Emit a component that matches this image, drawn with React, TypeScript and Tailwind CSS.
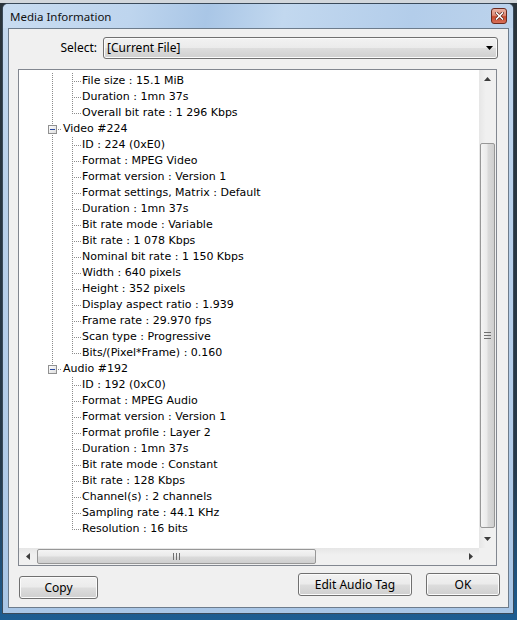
import React from 'react';

type Row =
  | { t: 'c'; text: string; l0: boolean; last: boolean }
  | { t: 'p'; text: string; lastTop: boolean };

const general = ['File size : 15.1 MiB', 'Duration : 1mn 37s', 'Overall bit rate : 1 296 Kbps'];
const video = [
  'ID : 224 (0xE0)',
  'Format : MPEG Video',
  'Format version : Version 1',
  'Format settings, Matrix : Default',
  'Duration : 1mn 37s',
  'Bit rate mode : Variable',
  'Bit rate : 1 078 Kbps',
  'Nominal bit rate : 1 150 Kbps',
  'Width : 640 pixels',
  'Height : 352 pixels',
  'Display aspect ratio : 1.939',
  'Frame rate : 29.970 fps',
  'Scan type : Progressive',
  'Bits/(Pixel*Frame) : 0.160',
];
const audio = [
  'ID : 192 (0xC0)',
  'Format : MPEG Audio',
  'Format version : Version 1',
  'Format profile : Layer 2',
  'Duration : 1mn 37s',
  'Bit rate mode : Constant',
  'Bit rate : 128 Kbps',
  'Channel(s) : 2 channels',
  'Sampling rate : 44.1 KHz',
  'Resolution : 16 bits',
];

const rows: Row[] = [
  ...general.map((text, i) => ({ t: 'c' as const, text, l0: true, last: i === general.length - 1 })),
  { t: 'p', text: 'Video #224', lastTop: false },
  ...video.map((text, i) => ({ t: 'c' as const, text, l0: true, last: i === video.length - 1 })),
  { t: 'p', text: 'Audio #192', lastTop: true },
  ...audio.map((text, i) => ({ t: 'c' as const, text, l0: false, last: i === audio.length - 1 })),
];

const DOT = '#8c8c8c';

function ChildLines({ l0, last }: { l0: boolean; last: boolean }) {
  return (
    <svg width="40" height="16" className="shrink-0 block">
      {l0 && <line x1="10.5" y1="0" x2="10.5" y2="16" stroke={DOT} strokeDasharray="1 1" />}
      <line x1="30.5" y1="0" x2="30.5" y2={last ? 9 : 16} stroke={DOT} strokeDasharray="1 1" />
      <line x1="32" y1="8.5" x2="40" y2="8.5" stroke={DOT} strokeDasharray="1 1" />
    </svg>
  );
}

function ParentLines({ lastTop }: { lastTop: boolean }) {
  return (
    <svg width="20" height="16" className="shrink-0 block">
      <line x1="10.5" y1="0" x2="10.5" y2="4" stroke={DOT} strokeDasharray="1 1" />
      {!lastTop && <line x1="10.5" y1="12" x2="10.5" y2="16" stroke={DOT} strokeDasharray="1 1" />}
      <defs>
        <linearGradient id="bx" x1="0" y1="0" x2="1" y2="1">
          <stop offset="0" stopColor="#ffffff" />
          <stop offset="1" stopColor="#dcdcdc" />
        </linearGradient>
      </defs>
      <rect x="6.5" y="4.5" width="8" height="8" fill="url(#bx)" stroke="#919191" />
      <line x1="8" y1="8.5" x2="13" y2="8.5" stroke="#2b4aa0" />
      <line x1="16" y1="8.5" x2="20" y2="8.5" stroke={DOT} strokeDasharray="1 1" />
    </svg>
  );
}

function TreeRow({ row }: { row: Row }) {
  if (row.t === 'c') {
    return (
      <div className="h-[16px] flex items-center">
        <ChildLines l0={row.l0} last={row.last} />
        <span className="leading-[16px] whitespace-nowrap">{row.text}</span>
      </div>
    );
  }
  return (
    <div className="h-[16px] flex items-center">
      <ParentLines lastTop={row.lastTop} />
      <span className="leading-[16px] whitespace-nowrap pl-[1px]">{row.text}</span>
    </div>
  );
}

function Tri({ dir, color = '#3c3c3c' }: { dir: 'up' | 'down' | 'left' | 'right'; color?: string }) {
  if (dir === 'up')
    return (
      <svg width="7" height="4" className="block">
        <polygon points="3.5,0 7,4 0,4" fill={color} />
      </svg>
    );
  if (dir === 'down')
    return (
      <svg width="7" height="4" className="block">
        <polygon points="0,0 7,0 3.5,4" fill={color} />
      </svg>
    );
  if (dir === 'left')
    return (
      <svg width="4" height="7" className="block">
        <polygon points="4,0 4,7 0,3.5" fill={color} />
      </svg>
    );
  return (
    <svg width="4" height="7" className="block">
      <polygon points="0,0 0,7 4,3.5" fill={color} />
    </svg>
  );
}

function VScroll() {
  return (
    <div className="w-[17px] flex flex-col bg-[linear-gradient(90deg,#e6e6e6,#f0f0f0_40%,#f0f0f0)]">
      <div className="h-[17px] flex items-center justify-center">
        <Tri dir="up" />
      </div>
      <div className="h-[56px]" />
      <div className="h-[385px] mx-[1px] rounded-[2px] border border-[#979797] bg-[linear-gradient(90deg,#f4f4f4,#eaeaea_45%,#dadada_55%,#cfcfcf)] flex items-center justify-center">
        <div className="flex flex-col gap-[2px]">
          <div className="w-[7px] h-px bg-[#6f6f6f]" />
          <div className="w-[7px] h-px bg-[#6f6f6f]" />
          <div className="w-[7px] h-px bg-[#6f6f6f]" />
        </div>
      </div>
      <div className="h-[2px]" />
      <div className="h-[17px] flex items-center justify-center">
        <Tri dir="down" />
      </div>
    </div>
  );
}

function HScroll() {
  return (
    <div className="h-[17px] flex bg-[linear-gradient(180deg,#e6e6e6,#f0f0f0_40%,#f0f0f0)]">
      <div className="w-[17px] flex items-center justify-center">
        <Tri dir="left" />
      </div>
      <div className="w-[1px]" />
      <div className="w-[279px] my-[1px] rounded-[2px] border border-[#979797] bg-[linear-gradient(180deg,#f4f4f4,#eaeaea_45%,#dadada_55%,#cfcfcf)] flex items-center justify-center">
        <div className="flex gap-[2px]">
          <div className="h-[7px] w-px bg-[#6f6f6f]" />
          <div className="h-[7px] w-px bg-[#6f6f6f]" />
          <div className="h-[7px] w-px bg-[#6f6f6f]" />
        </div>
      </div>
      <div className="flex-1" />
      <div className="w-[17px] flex items-center justify-center">
        <Tri dir="right" />
      </div>
    </div>
  );
}

function Button({ label, w, extra = '' }: { label: string; w: string; extra?: string }) {
  return (
    <div
      className={`${w} ${extra} h-[23px] rounded-[3px] border border-[#707070] bg-[linear-gradient(180deg,#f2f2f2_0%,#ebebeb_48%,#dddddd_52%,#cfcfcf_100%)] shadow-[inset_0_0_0_1px_#fbfbfb] flex items-center justify-center text-[12px] text-black pt-[1px]`}
    >
      {label}
    </div>
  );
}

function CloseBtn() {
  return (
    <div className="mt-[4px] w-[16px] h-[16px] rounded-[3px] border border-[#6b2a1e] bg-[linear-gradient(180deg,#eab2a4_0%,#de8c77_45%,#c8492c_55%,#d7705a_100%)] flex items-center justify-center">
      <svg width="9" height="8" className="block">
        <path d="M1.5,1 L7.5,7 M7.5,1 L1.5,7" stroke="#5a2218" strokeWidth="3" strokeLinecap="square" />
        <path d="M1.5,1 L7.5,7 M7.5,1 L1.5,7" stroke="#ffffff" strokeWidth="1.6" strokeLinecap="square" />
      </svg>
    </div>
  );
}

export default function App() {
  return (
    <div className="w-[517px] h-[620px] overflow-hidden bg-[linear-gradient(180deg,#d2d7dc_0px,#d2d7dc_3px,#2a343b_3px,#26394a_75%,#1d5d92_100%)] pt-[3px] pl-[2px] font-['Noto_Sans',sans-serif]">
      <div className="w-[512px] h-[611px] border border-[#3a4a5a] rounded-t-[6px] bg-[linear-gradient(180deg,#c4d9ef_0%,#b9d1eb_30%,#b2cce9_70%,#a9c6e6_100%)] flex flex-col">
        <div className="h-[24px] flex items-start pl-[7px] pr-[6px] bg-[linear-gradient(100deg,#c8dcf1_0%,#bed5ee_25%,#a9c6e6_40%,#c2d8ef_55%,#b3cdea_80%,#bcd3ec_100%)] rounded-t-[5px]">
          <div className="flex-1 h-[24px] flex items-center text-[11.5px] text-[#111] pt-[1px]">Media Information</div>
          <CloseBtn />
        </div>
        <div className="flex-1 flex pl-[5px] pr-[4px] pb-[5px]">
          <div className="flex-1 border border-[#6d7c8c] bg-[#f0f0f0] flex flex-col">
            <div className="mt-[8px] h-[22px] flex items-center">
              <div className="w-[88px] text-right text-[12px] text-black">Select:</div>
              <div className="ml-[6px] w-[395px] h-[22px] rounded-[3px] border border-[#707070] bg-[linear-gradient(180deg,#f2f2f2_0%,#ebebeb_48%,#dddddd_52%,#cfcfcf_100%)] shadow-[inset_0_0_0_1px_#fbfbfb] flex items-center pl-[3px] pr-[4px]">
                <span className="flex-1 text-[12px] text-black">[Current File]</span>
                <Tri dir="down" color="#000" />
              </div>
            </div>
            <div className="mt-[10px] ml-[9px] w-[479px] h-[497px] border border-[#828790] bg-white flex flex-col">
              <div className="flex-1 flex min-h-0">
                <div className="flex-1 overflow-hidden pt-[3px] pl-[23px] font-['DejaVu_Sans',sans-serif] text-[11px] text-black">
                  {rows.map((r, i) => (
                    <TreeRow key={i} row={r} />
                  ))}
                </div>
                <VScroll />
              </div>
              <div className="flex">
                <div className="flex-1">
                  <HScroll />
                </div>
                <div className="w-[17px] h-[17px] bg-[#f0f0f0]" />
              </div>
            </div>
            <div className="mt-[7px] flex items-start pl-[10px] pr-[8px]">
              <Button label="Copy" w="w-[79px]" extra="mt-[3px]" />
              <div className="flex-1" />
              <Button label="Edit Audio Tag" w="w-[114px]" />
              <Button label="OK" w="w-[74px]" extra="ml-[14px]" />
            </div>
          </div>
        </div>
      </div>
    </div>
  );
}
